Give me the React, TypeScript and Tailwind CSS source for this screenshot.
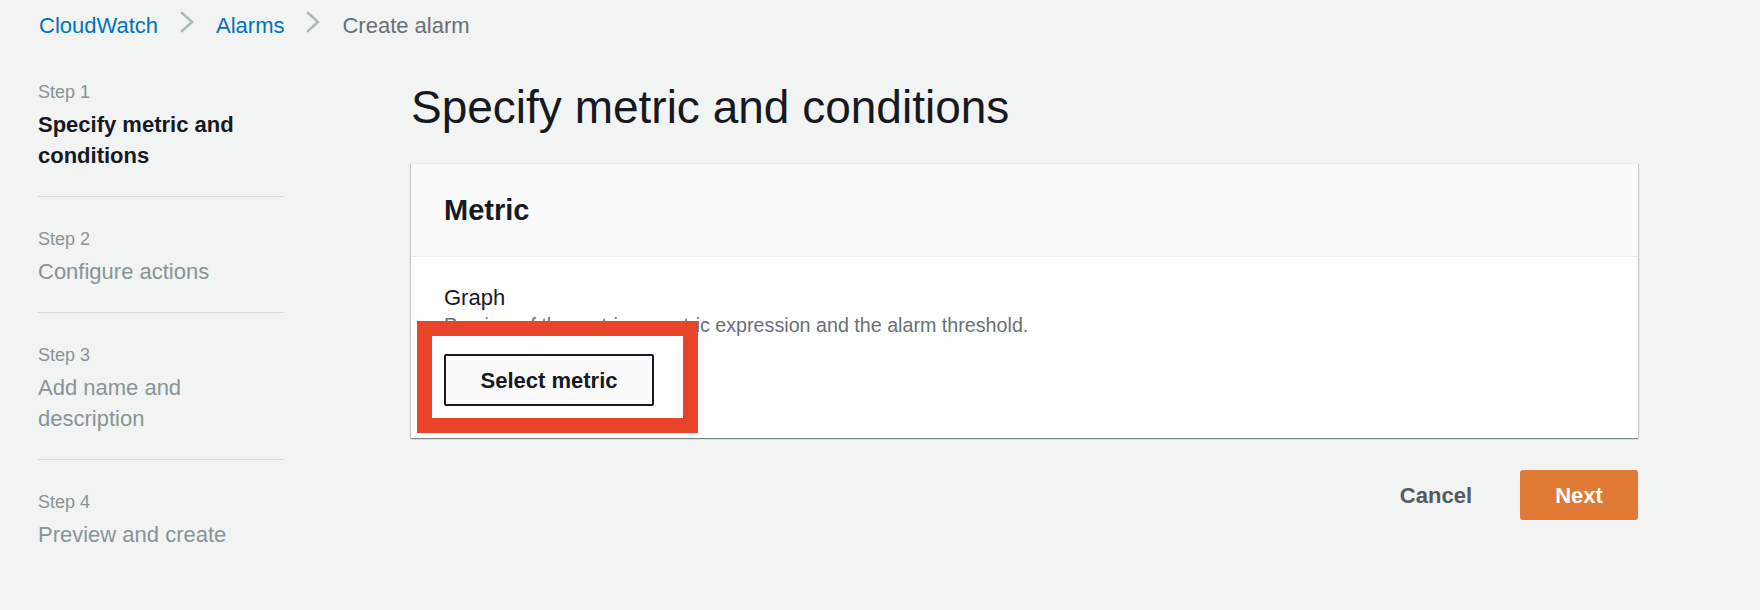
import React from "react";

const font = { fontFamily: '"Liberation Sans", Arial, sans-serif' };

function Chevron() {
  return (
    <svg width="14" height="22" viewBox="0 0 14 22" className="mx-[22px] shrink-0" aria-hidden="true">
      <polyline points="2,2 12,11 2,20" fill="none" stroke="#aab7b8" strokeWidth="2.4" strokeLinecap="square" />
    </svg>
  );
}

type Step = { label: string; title: string; active?: boolean };

const steps: Step[] = [
  { label: "Step 1", title: "Specify metric and conditions", active: true },
  { label: "Step 2", title: "Configure actions" },
  { label: "Step 3", title: "Add name and description" },
  { label: "Step 4", title: "Preview and create" },
];

export default function App() {
  return (
    <div className="min-h-[610px] w-full bg-[#f2f3f3] text-[#16191f]" style={font}>
      {/* Breadcrumb */}
      <nav className="flex items-start h-[80px] pl-[39px] pt-[11px] text-[22px] leading-[30px]">
        <span className="text-[#0073bb]">CloudWatch</span>
        <Chevron />
        <span className="text-[#0073bb]">Alarms</span>
        <Chevron />
        <span className="text-[#687078]">Create alarm</span>
      </nav>

      <div className="flex">
        {/* Sidebar */}
        <aside className="ml-[38px] w-[246px] shrink-0">
          {steps.map((s, i) => (
            <div
              key={s.label}
              className={
                (i > 0 ? "pt-[30px] " : "") +
                (i < steps.length - 1 ? "pb-[25px] border-b border-[#d5dbdb]" : "")
              }
            >
              <div className="text-[18px] leading-[24px] text-[#879596]">{s.label}</div>
              <div
                className={
                  "mt-[5px] text-[22px] leading-[31px] " +
                  (s.active ? "font-bold text-[#16191f] pr-[20px]" : "text-[#879596]")
                }
              >
                {s.title}
              </div>
            </div>
          ))}
        </aside>

        {/* Main */}
        <main className="ml-[127px] mr-[122px] flex-1">
          <h1 className="text-[46px] leading-[55px] font-normal text-[#16191f]">
            Specify metric and conditions
          </h1>

          <section className="mt-[28px] bg-white border-t border-[#eaeded] shadow-[0_1px_1px_0_rgba(0,28,36,0.3),1px_1px_1px_0_rgba(0,28,36,0.15),-1px_1px_1px_0_rgba(0,28,36,0.15)]">
            <header className="bg-[#fafafa] border-b border-[#eaeded] px-[33px] py-[28px]">
              <h2 className="text-[29px] leading-[36px] font-bold">Metric</h2>
            </header>
            <div className="px-[33px] pt-[26px] pb-[32px]">
              <div className="text-[22px] leading-[30px] text-[#16191f]">Graph</div>
              <div className="text-[19.7px] leading-[24px] text-[#687078]">
                Preview of the metric or metric expression and the alarm threshold.
              </div>
              <div className="relative mt-[17px] w-[210px]">
                <button className="w-[210px] h-[52px] border-2 border-[#16191f] rounded-[2px] bg-[#fafafa] text-[22px] font-bold text-[#16191f]">
                  Select metric
                </button>
                <div className="absolute left-[-27px] top-[-33px] w-[281px] h-[112px] border-[15px] border-[#e9432a] pointer-events-none" />
              </div>
            </div>
          </section>

          <div className="mt-[32px] flex justify-end items-center gap-[48px]">
            <button className="h-[50px] text-[22px] font-bold text-[#545b64]">Cancel</button>
            <button className="h-[50px] w-[118px] rounded-[3px] bg-[#e07a35] text-[22px] font-bold text-white">
              Next
            </button>
          </div>
        </main>
      </div>
    </div>
  );
}
